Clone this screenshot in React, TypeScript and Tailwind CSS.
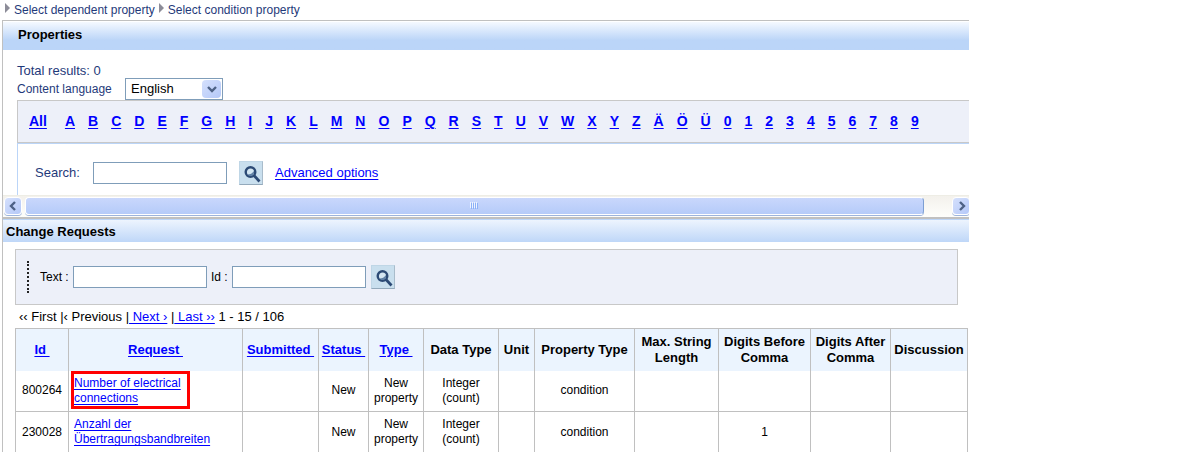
import { ReactNode } from "react";

const letters = [
  ..."ABCDEFGHIJKLMNOPQRSTUVWXYZÄÖÜ0123456789",
];

const columns = [
  { title: "Id", width: "w-[53px]", sortable: true },
  { title: "Request", width: "w-[174px]", sortable: true },
  { title: "Submitted", width: "w-[76px]", sortable: true },
  { title: "Status", width: "w-[50px]", sortable: true },
  { title: "Type", width: "w-[55px]", sortable: true },
  { title: "Data Type", width: "w-[75px]" },
  { title: "Unit", width: "w-[36px]" },
  { title: "Property Type", width: "w-[100px]" },
  { title: "Max. String Length", width: "w-[84px]" },
  { title: "Digits Before Comma", width: "w-[92px]" },
  { title: "Digits After Comma", width: "w-[80px]" },
  { title: "Discussion", width: "w-[77px]" },
];

const rows = [
  {
    id: "800264",
    request: ["Number of electrical", "connections"],
    before: "",
    highlighted: true,
  },
  {
    id: "230028",
    request: ["Anzahl der", "Übertragungsbandbreiten"],
    before: "1",
    highlighted: false,
  },
];

const link = "text-[#0000ff] underline underline-offset-2";
const textBox = "h-[22px] w-[134px] border border-[#7f9db9] bg-white px-1";

function Crumb({ children }: { children: ReactNode }) {
  return (
    <a href="#" className="flex items-center gap-1">
      <svg width="5" height="10" viewBox="0 0 5 10" className="-mt-1">
        <path d="M0 0 5 5 0 10z" fill="#8c8c98" />
      </svg>
      {children}
    </a>
  );
}

function SearchButton() {
  return (
    <button
      aria-label="Search"
      className="size-6 border border-t-[#bfd6e6] border-l-[#bfd6e6] border-r-[#a9bccb] border-b-[#93a9bb] bg-[#c9dfee]"
    >
      <svg width="22" height="22" viewBox="0 0 22 22" fill="none">
        <circle cx="10.5" cy="10" r="4.8" fill="#d4e6f2" stroke="#2c4a75" strokeWidth="2.4" />
        <path d="M7.5 12.5q4 0 6.500-3.500v2.500l-2 2.500H9.500z" fill="#5f80a5" />
        <path d="m14 13.5 5.500 6" stroke="#2c4a75" strokeWidth="2.7" />
      </svg>
    </button>
  );
}

function Chevron({ d }: { d: string }) {
  return (
    <svg width="10" height="10" viewBox="0 0 10 10" fill="none">
      <path d={d} stroke="#4d6185" strokeWidth="2.4" />
    </svg>
  );
}

function Scrollbar() {
  const arrow =
    "flex h-[18px] w-[18px] shrink-0 items-center justify-center rounded-sm border border-white bg-linear-to-br from-[#d5e0fc] to-[#b4c8f8] shadow-[0_1px_0_#9db4dc]";
  return (
    <div className="flex h-[22px] items-start border-t border-[#eeede5] bg-linear-to-b from-[#f3f1ec] to-[#fefefb] pt-px pl-px">
      <button aria-label="Scroll left" className={arrow}>
        <Chevron d="M7 1 3 5l4 4" />
      </button>
      <div className="ml-[3px] flex h-[18px] flex-1 items-center justify-center gap-px rounded-sm border border-white border-r-[#7d9fd3] bg-linear-to-b from-[#c9d7fc] to-[#b5cbf9] shadow-[0_1px_0_#9db4dc]">
        {[0, 1, 2, 3].map((i) => (
          <span key={i} className="h-[6px] w-px bg-[#8cb0f8] shadow-[-1px_-1px_0_#eef4fe]" />
        ))}
      </div>
      <div className="w-7" />
      <button aria-label="Scroll right" className={`${arrow} -mr-px`}>
        <Chevron d="m4 1 4 4-4 4" />
      </button>
    </div>
  );
}

function PropertiesPanel() {
  return (
    <section className="overflow-hidden border-t border-[#c0c0c0] pt-px">
      <h2 className="h-7 bg-linear-to-b from-[#f5f9ff] to-[#bbd5f8] to-65% pl-[15px] text-[13px] leading-[26px] font-bold">
        Properties
      </h2>
      <div className="pt-3 pl-[14px] text-[#1f3a7a]">
        <p className="h-4 text-[13px] leading-[18px]">Total results: 0</p>
        <div className="flex h-[22px] items-center gap-[10px]">
          <label htmlFor="language" className="w-[98px]">
            Content language
          </label>
          <div className="relative">
            <select
              id="language"
              className="block h-[22px] w-[98px] appearance-none border border-[#7f9db9] bg-white pl-[5px] text-[13px] text-black"
            >
              <option>English</option>
            </select>
            <span className="pointer-events-none absolute top-[2px] right-[2px] flex h-[18px] w-[19px] items-center justify-center rounded-sm bg-linear-to-br from-[#d5e0fc] to-[#b4c8f8]">
              <Chevron d="m1 3 4 4 4-4" />
            </span>
          </div>
        </div>
        <nav className="flex h-[43px] items-center border-y border-l border-[#c8c8c8] bg-[#edf0f9] pb-px pl-[11px] text-sm font-bold">
          <a href="#" className={`${link} mr-[18px]`}>
            All
          </a>
          <div className="flex gap-[13px]">
            {letters.map((letter) => (
              <a key={letter} href="#" className={link}>
                {letter}
              </a>
            ))}
          </div>
        </nav>
        <form className="flex h-[52px] items-center border-t border-l border-t-[#bbd5f8] border-l-[#bbd5f8] pt-[7px] pl-[17px]">
          <label htmlFor="search" className="w-[58px] text-[13px]">
            Search:
          </label>
          <input id="search" type="text" className={`${textBox} mr-3`} />
          <SearchButton />
          <a href="#" className={`${link} ml-3 text-[13px]`}>
            Advanced options
          </a>
        </form>
      </div>
      <Scrollbar />
    </section>
  );
}

function RequestsTable() {
  return (
    <table className="mr-px ml-3 w-[calc(100%-13px)] table-fixed border-collapse border border-[#c0c0c0] text-center leading-[15px]">
      <thead>
        <tr className="h-[42px] bg-[#ebf4fe] text-[13px] leading-4">
          {columns.map((column) => (
            <th key={column.title} className={`${column.width} border-x border-[#c0c0c0] px-[2px]`}>
              {column.sortable ? (
                <a href="#" className={`${link} whitespace-pre`}>
                  {column.title + " "}
                </a>
              ) : (
                column.title
              )}
            </th>
          ))}
        </tr>
      </thead>
      <tbody>
        {rows.map((row) => (
          <tr key={row.id} className="h-[41px] border-b border-[#c0c0c0] *:border-x *:border-[#c0c0c0]">
            <td>{row.id}</td>
            <td className="relative pl-[5px] text-left">
              <a href="#" className={link}>
                {row.request[0]}
                <br />
                {row.request[1]}
              </a>
              {row.highlighted && (
                <span className="pointer-events-none absolute top-0 left-[2px] h-[38px] w-[119px] border-3 border-[#ff0000]" />
              )}
            </td>
            <td></td>
            <td>New</td>
            <td>New property</td>
            <td>
              Integer
              <br />
              (count)
            </td>
            <td></td>
            <td>condition</td>
            <td></td>
            <td>{row.before}</td>
            <td></td>
            <td></td>
          </tr>
        ))}
      </tbody>
    </table>
  );
}

function ChangeRequestsPanel() {
  return (
    <section className="border-t-2 border-[#c0c0c0]">
      <h2 className="h-[23px] border-t border-[#bbd5f8] bg-linear-to-b from-[#edf4fe] to-[#bfd7f8] pl-[3px] text-[13px] leading-[23px] font-bold">
        Change Requests
      </h2>
      <form className="mt-[7px] mr-[11px] ml-3 flex h-14 items-center border border-[#c8c8c8] bg-[#edf0f9] pl-[11px]">
        <span className="mr-[11px] h-8 border-l-2 border-dotted border-[#222]" />
        <label htmlFor="text" className="w-[33px]">
          Text :
        </label>
        <input id="text" type="text" className={textBox} />
        <label htmlFor="id" className="ml-1 w-[21px]">
          Id :
        </label>
        <input id="id" type="text" className={`${textBox} mr-[5px]`} />
        <SearchButton />
      </form>
      <nav className="h-[23px] pl-4 text-[13px] leading-[23px] whitespace-pre">
        ‹‹ First |‹ Previous |
        <a href="#" className={link}>
          {" Next ›"}
        </a>
        {" |"}
        <a href="#" className={link}>
          {" Last ››"}
        </a>
        {" 1 - 15 / 106"}
      </nav>
      <RequestsTable />
    </section>
  );
}

export default function App() {
  return (
    <div className="bg-white pr-[210px] font-['Liberation_Sans',Arial,sans-serif] text-xs text-black">
      <nav className="flex h-5 items-center gap-1 pl-[5px] text-[#1f3a7a]">
        <Crumb>Select dependent property</Crumb>
        <Crumb>Select condition property</Crumb>
      </nav>
      <main className="ml-[2px] border-l border-[#c0c0c0]">
        <PropertiesPanel />
        <ChangeRequestsPanel />
      </main>
    </div>
  );
}
